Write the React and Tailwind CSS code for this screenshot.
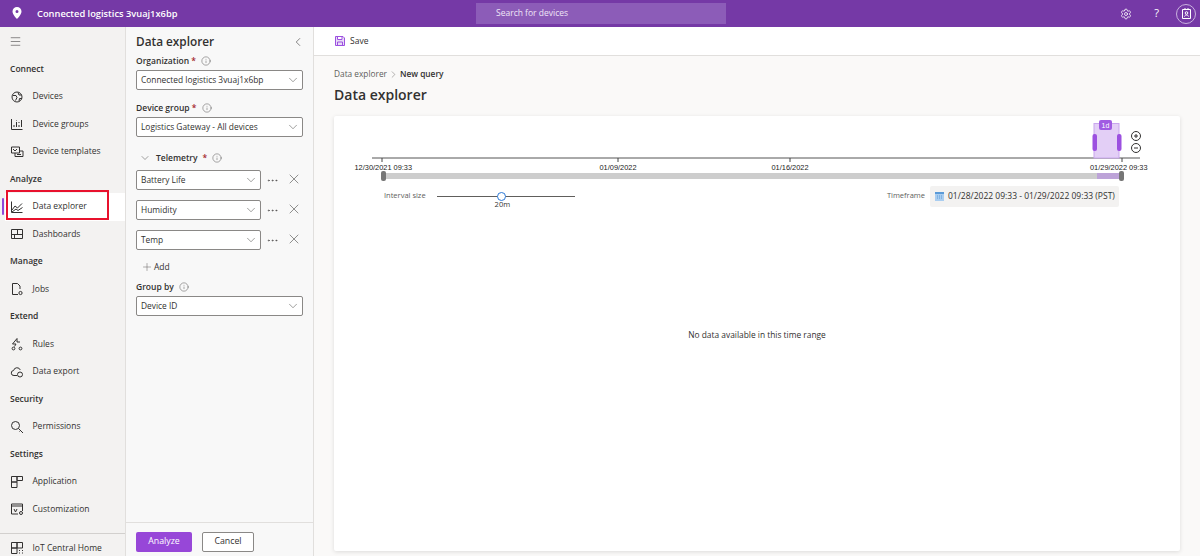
// App.jsx
import React from 'react';
import { ChevronDown, ChevronLeft, ChevronRight, Info, MoreHorizontal, X, Plus, Menu, Settings } from 'lucide-react';

const NAV = [
  { type: 'head', label: 'Connect' },
  { label: 'Devices', icon: 'devices' },
  { label: 'Device groups', icon: 'groups' },
  { label: 'Device templates', icon: 'templates' },
  { type: 'head', label: 'Analyze' },
  { label: 'Data explorer', icon: 'chart', active: true },
  { label: 'Dashboards', icon: 'dash' },
  { type: 'head', label: 'Manage' },
  { label: 'Jobs', icon: 'jobs' },
  { type: 'head', label: 'Extend' },
  { label: 'Rules', icon: 'rules' },
  { label: 'Data export', icon: 'cloud' },
  { type: 'head', label: 'Security' },
  { label: 'Permissions', icon: 'key' },
  { type: 'head', label: 'Settings' },
  { label: 'Application', icon: 'app' },
  { label: 'Customization', icon: 'custom' },
];

function NavIcon({ name }) {
  const shapes = {
    devices: <><circle cx="7" cy="7" r="5" /><path d="M3 5.500h3l1 2-1.500 3M8 2.500l1 2.500h2.500M9 11l.5-2.500h2.500" /></>,
    groups: <path d="M1.500 2v10.500h11M4 10V8M6.500 10V5M6.500 3.500V3M9 10V8M9 6V5M11.500 10V3" />,
    templates: <><path d="M1.500 2h8v6h-8zM3 4l2 2 2-2" /><path d="M5 8v3.500h8V6H9.500M7 9.500h4" /></>,
    chart: <path d="M1.500 1.500v11h11M2 10l3-4 2.500 2L12 3.500M2 12l4-3 2 1.500 4.500-3" />,
    dash: <path d="M1.500 2.500h11v9h-11zM7.500 2.500v5M1.500 7.500h11M4.500 7.500v4" />,
    jobs: <><path d="M8 12.500H2.500v-11h5l2.500 2.500v3" /><circle cx="10.500" cy="11" r="1.600" /></>,
    rules: <><path d="M7 1.500L2.500 7H6L4.500 9.500M7 1.500V5h3" /><circle cx="3.500" cy="11.500" r="1.400" /><circle cx="10.500" cy="11.500" r="1.400" /></>,
    cloud: <><path d="M7 10.500H4a2.500 2.500 0 0 1-.4-5A3.500 3.500 0 0 1 10.300 5" /><circle cx="10" cy="9.500" r="2.500" /></>,
    key: <><circle cx="5.500" cy="5.500" r="4" /><path d="M8.500 8.500l4.500 4.500M10.500 10.500l-1 1" /></>,
    app: <path d="M1.500 1.500h5.500v5.500H1.500zM1.500 7h5.500v5.500H1.500zM7 1.500h5.500v4H7z" />,
    custom: <><path d="M1.500 2h11v7M8 12H1.500V2M1.500 4h11" /><path d="M4 7l1.500 3L7 7" /><circle cx="11" cy="11" r="1.500" /></>,
    home: <path d="M1.500 1.500h5.500v5.500H1.500zM1.500 7h5.500v5.500H1.500zM7 1.500h5.500v5.500H7zM9 9.500h1M12 9.500h1M9 12h1M12 12h1" />,
  };
  return (
    <svg width="14" height="14" viewBox="0 0 14 14" fill="none" stroke="#323130" strokeWidth="1" className="shrink-0">
      {shapes[name]}
    </svg>
  );
}

function NavRow({ item }) {
  if (item.type === 'head') {
    return <div className="h-[27.5px] pl-[10px] flex items-center text-[8.5px] font-semibold text-[#323130]">{item.label}</div>;
  }
  return (
    <div className={`relative h-[27.5px] ml-[5px] pl-[5px] flex items-center gap-[8.5px] text-[8.5px] text-[#323130] ${item.active ? 'bg-white' : ''}`}>
      {item.active && <span className="absolute -left-[3px] top-[5px] h-[17px] w-[2px] rounded bg-[#8f48d8]" />}
      <NavIcon name={item.icon} />
      <span>{item.label}</span>
      {item.active && <span className="absolute left-[1px] -top-[3px] w-[103px] h-[30px] border-[2.5px] border-[#e8112d]" />}
    </div>
  );
}

function FieldLabel({ text, required }) {
  return (
    <div className="h-[14px] flex items-center gap-[4px] text-[8.5px] font-semibold text-[#323130]">
      <span>{text}{required && <span className="text-[#a4262c]"> *</span>}</span>
      <Info size={10} strokeWidth={1} className="ml-[1px]" />
    </div>
  );
}

function Select({ value }) {
  return (
    <div className="h-[20px] flex-1 min-w-0 bg-white border border-[#8a8886] rounded-[2px] flex items-center justify-between pl-[4px] pr-[2px] text-[8.4px] text-[#323130]">
      <span>{value}</span>
      <ChevronDown size={14} strokeWidth={0.8} />
    </div>
  );
}

function TelemetryRow({ value }) {
  return (
    <div className="flex items-center h-[20px] mb-[10px]">
      <div className="w-[125px] flex"><Select value={value} /></div>
      <MoreHorizontal size={13} strokeWidth={1} className="ml-[5px] text-[#323130]" />
      <X size={16} strokeWidth={0.8} className="ml-[7px] -mt-[2px] text-[#323130]" />
    </div>
  );
}

function Timeline() {
  return (
    <svg width="846" height="120" viewBox="0 0 846 120" className="block" fontFamily="'Liberation Sans', sans-serif">
      {/* axis, positions are relative to the card */}
      <path d="M38 42H806" stroke="#555" strokeWidth="1" />
      {[48, 284, 456, 788].map((x) => <path key={x} d={`M${x} 42v4`} stroke="#444" />)}
      <g fontSize="7.4" fill="#222">
        <text x="20.500" y="53.500">12/30/2021 09:33</text>
        <text x="284" y="53.500" textAnchor="middle">01/09/2022</text>
        <text x="456" y="53.500" textAnchor="middle">01/16/2022</text>
        <text x="756" y="53.500">01/29/2022 09:33</text>
      </g>
      {/* brush */}
      <rect x="48" y="57" width="740" height="6" fill="#cdcdcd" />
      <rect x="763" y="57" width="25" height="6" fill="#bda3d8" />
      <rect x="47" y="55" width="5" height="10" rx="2" fill="#767676" />
      <rect x="785" y="55" width="5" height="10" rx="2" fill="#767676" />
      {/* zoom window */}
      <rect x="760" y="7.500" width="25" height="34.500" fill="#e3cff6" stroke="#c9a6ee" />
      <rect x="758.500" y="18" width="4.500" height="17" rx="2" fill="#9c50e0" />
      <rect x="783" y="18" width="4.500" height="17" rx="2" fill="#9c50e0" />
      <rect x="765" y="4" width="13" height="10" rx="2" fill="#a05ce2" />
      <text x="771.500" y="12" fontSize="7" fill="#fff" textAnchor="middle">1d</text>
      <g fill="none" stroke="#323130">
        <circle cx="802" cy="20" r="4.500" /><path d="M800 20h4M802 18v4" />
        <circle cx="802" cy="32" r="4.500" /><path d="M800 32h4" />
      </g>
    </svg>
  );
}

export default function App() {
  return (
    <div className="w-[1200px] h-[556px] overflow-hidden flex flex-col bg-white text-[#323130] font-['Open_Sans','Noto_Sans',sans-serif]">
      <header className="h-[27px] shrink-0 bg-[#7539a6] flex items-center text-white">
        <svg width="10" height="12" viewBox="0 0 10 12" className="ml-[12px] -mt-[2px]">
          <path fillRule="evenodd" fill="white" d="M5 0a4.500 4.500 0 0 1 4.500 4.500C9.500 7.500 5 12 5 12S.5 7.500.5 4.500A4.500 4.500 0 0 1 5 0zm0 3a1.500 1.500 0 1 0 0 3 1.500 1.500 0 0 0 0-3z" />
        </svg>
        <span className="ml-[15px] w-[439px] text-[9.3px] font-semibold">Connected logistics 3vuaj1x6bp</span>
        <div className="w-[250px] h-[21px] bg-[#8c5cb8] pl-[20px] flex items-center text-[8.5px] text-[#efe6f7]">Search for devices</div>
        <div className="ml-auto flex items-center">
          <Settings size={12} strokeWidth={1.6} />
          <span className="ml-[22px] text-[11px]">?</span>
          <div className="ml-[17px] mr-[4px] w-[20px] h-[20px] rounded-full border border-[#c9b2de] flex items-center justify-center">
            <svg width="11" height="13" viewBox="0 0 11 13" fill="none" stroke="white">
              <path d="M1.500 2.500h8v9h-8zM4 2.500V1M7 2.500V1M3.500 9.500c.5-2 3.500-2 4 0" /><circle cx="5.500" cy="6" r="1.300" />
            </svg>
          </div>
        </div>
      </header>

      <div className="flex-1 min-h-0 flex">
        <nav className="w-[126px] shrink-0 bg-[#f3f2f1] border-r border-[#e1dfdd] flex flex-col">
          <div className="h-[28.5px] pl-[9px] pt-[1px] flex items-center">
            <Menu size={13} strokeWidth={1} />
          </div>
          {NAV.map((item) => <NavRow key={item.label} item={item} />)}
          <div className="mt-auto h-[23px] border-t border-[#d2d0ce] pl-[10px] pt-[6px] flex items-center gap-[8.5px] text-[8.5px]">
            <NavIcon name="home" />
            <span>IoT Central Home</span>
          </div>
        </nav>

        <aside className="w-[188px] shrink-0 bg-[#f8f8f8] border-r border-[#e1dfdd] flex flex-col">
          <div className="flex-1 min-h-0 pl-[10px] pr-[10px]">
            <div className="h-[27px] pt-[3px] flex items-center justify-between">
              <span className="text-[11.8px] font-semibold text-[#323130]">Data explorer</span>
              <ChevronLeft size={14} strokeWidth={1} className="-mr-[2px]" />
            </div>
            <FieldLabel text="Organization" required />
            <div className="flex mt-[2px]"><Select value="Connected logistics 3vuaj1x6bp" /></div>
            <div className="mt-[11px]"><FieldLabel text="Device group" required /></div>
            <div className="flex mt-[2px]"><Select value="Logistics Gateway - All devices" /></div>
            <div className="mt-[14px] h-[14px] flex items-center text-[8.5px] font-semibold">
              <ChevronDown size={12} strokeWidth={0.9} className="ml-[3px] mr-[5px]" />
              <span>Telemetry</span>
              <span className="text-[#a4262c] ml-[5px]">*</span>
              <Info size={10} strokeWidth={1} className="ml-[5px]" />
            </div>
            <div className="mt-[5px]">
              <TelemetryRow value="Battery Life" />
              <TelemetryRow value="Humidity" />
              <TelemetryRow value="Temp" />
            </div>
            <div className="h-[14px] pl-[5px] flex items-center gap-[1px] text-[8.5px]">
              <Plus size={12} strokeWidth={1} className="text-[#605e5c]" />
              <span>Add</span>
            </div>
            <div className="mt-[6px]"><FieldLabel text="Group by" /></div>
            <div className="flex mt-[2px]"><Select value="Device ID" /></div>
          </div>
          <div className="h-[34px] shrink-0 border-t border-[#e1dfdd] pl-[10px] pt-[9px] flex items-start gap-[10px] text-[8.8px]">
            <div className="w-[56px] h-[20px] bg-[#9747d8] rounded-[2px] text-white flex items-center justify-center">Analyze</div>
            <div className="w-[52px] h-[20px] bg-white border border-[#8a8886] rounded-[2px] flex items-center justify-center">Cancel</div>
          </div>
        </aside>

        <main className="flex-1 min-w-0 bg-[#faf9f8] flex flex-col">
          <div className="h-[29px] shrink-0 bg-white border-b border-[#e1dfdd] pl-[21px] flex items-center gap-[5px] text-[8.5px]">
            <svg width="10" height="10" viewBox="0 0 10 10" fill="#e9dcf7" stroke="#9c50e0" strokeWidth="1">
              <path d="M.5.5h7.500l1.500 1.500v7.500h-9zM2.500.5v3h4.500v-3M2.500 9.500v-3.500h5v3.500" />
            </svg>
            <span>Save</span>
          </div>
          <div className="pl-[20px] pt-[12px] h-[60px] shrink-0">
            <div className="h-[12px] flex items-center text-[8.3px] text-[#605e5c]">
              <span>Data explorer</span>
              <ChevronRight size={11} strokeWidth={1} className="mx-[1px]" />
              <span className="font-semibold text-[#323130]">New query</span>
            </div>
            <div className="mt-[4px] text-[14px] font-semibold leading-[22px] text-[#323130]">Data explorer</div>
          </div>
          <section className="mx-[20px] w-[846px] h-[435px] bg-white rounded-[2px] shadow-[0_1px_4px_rgba(0,0,0,0.12)] flex flex-col">
            <Timeline />
            <div className="-mt-[52px] h-[24px] flex items-center text-[7.5px] text-[#605e5c]">
              <span className="ml-[50px]">Interval size</span>
              <div className="relative ml-[11px] w-[138px] h-[1px] bg-[#605e5c]">
                <span className="absolute left-[60px] -top-[4px] w-[9px] h-[9px] rounded-full bg-white border-[1.5px] border-[#2b79d8]" />
                <span className="absolute left-[58px] top-[3px] text-[#323130]">20m</span>
              </div>
              <span className="ml-auto">Timeframe</span>
              <div className="ml-[5px] mr-[61px] h-[21px] w-[189px] bg-[#f3f2f1] rounded-[2px] flex items-center pl-[5px] gap-[4px] text-[8.5px] text-[#323130]">
                <svg width="9" height="9" viewBox="0 0 9 9"><rect width="9" height="9" fill="#a9cdf0" /><rect y="0" width="9" height="2" fill="#5a9ad8" /><path d="M2 4h5M2 6h5" stroke="#5a9ad8" strokeDasharray="1 1" /></svg>
                <span className="whitespace-nowrap">01/28/2022 09:33 - 01/29/2022 09:33 (PST)</span>
              </div>
            </div>
            <div className="flex-1 flex items-center justify-center text-[8.4px] text-[#323130] pb-[88px]">No data available in this time range</div>
          </section>
        </main>
      </div>
    </div>
  );
}
